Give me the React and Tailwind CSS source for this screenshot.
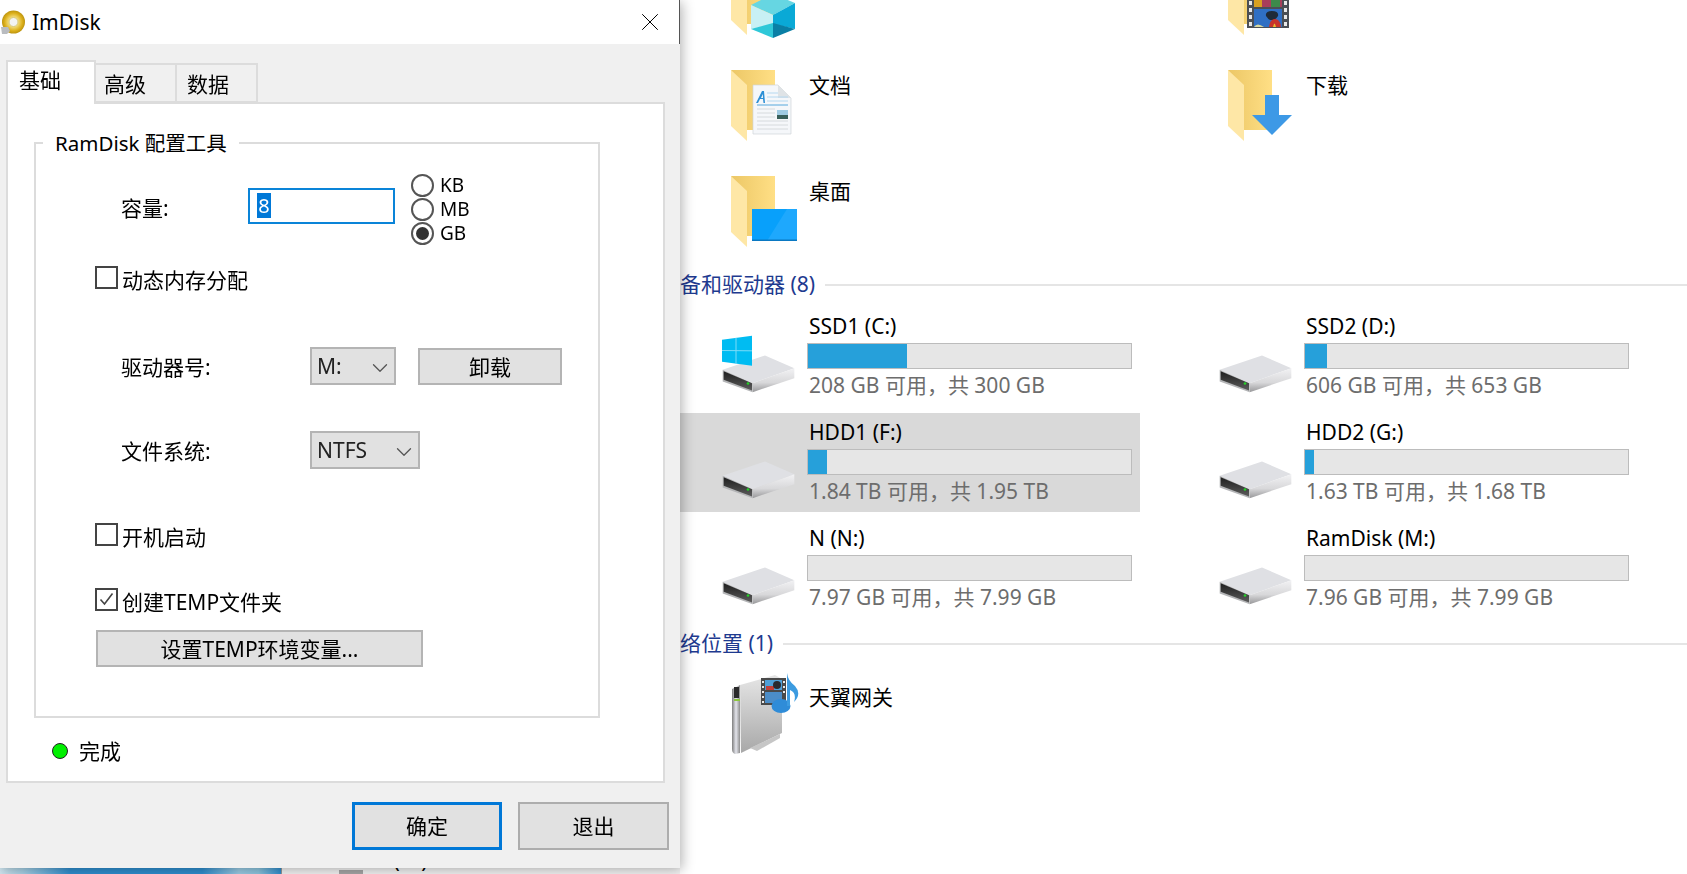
import React from "react";
import { ChevronDown, X } from "lucide-react";

const CJK = "font-['Noto_Sans','Noto_Sans_CJK_SC',sans-serif]";

const drives = [
  { name: "SSD1 (C:)", used: 99, info: "208 GB 可用，共 300 GB", windows: true },
  { name: "SSD2 (D:)", used: 22, info: "606 GB 可用，共 653 GB" },
  { name: "HDD1 (F:)", used: 19, info: "1.84 TB 可用，共 1.95 TB", selected: true },
  { name: "HDD2 (G:)", used: 9, info: "1.63 TB 可用，共 1.68 TB" },
  { name: "N (N:)", used: 0, info: "7.97 GB 可用，共 7.99 GB" },
  { name: "RamDisk (M:)", used: 0, info: "7.96 GB 可用，共 7.99 GB" },
];

function Folder({ children }) {
  return (
    <svg width="66" height="72" viewBox="0 0 66 72" className="shrink-0 overflow-visible">
      <defs>
        <linearGradient id="folderBack" x1="0" y1="0" x2="1" y2="0">
          <stop offset="0" stopColor="#ecc766" />
          <stop offset="1" stopColor="#ffdf85" />
        </linearGradient>
      </defs>
      <path d="M0 0H44V60H16Z" fill="url(#folderBack)" />
      <path d="M0 0L16 15V71L0 56Z" fill="#fee7a6" />
      {children}
    </svg>
  );
}

function DocOverlay() {
  return (
    <g>
      <path d="M22 15H47L60 28V64H22Z" fill="#f5f7fa" stroke="#d0d4d8" strokeWidth="0.7" />
      <path d="M47 15V28H60Z" fill="#dfe3e6" />
      <path d="M25 33L31 21H33L34 33H32.5L32 29H29L27 33ZM30 28H32L31.8 24Z" fill="#2d8fd5" />
      <path d="M36 23H47M36 27H57M36 31H57" stroke="#b5d8f0" strokeWidth="1" />
      <path d="M26 35H57" stroke="#56a8dc" strokeWidth="1" />
      <path d="M26 39H44M26 43H44M26 47H44M26 51H57M26 55H57M26 59H57" stroke="#d6dadd" strokeWidth="1" />
      <rect x="46" y="40" width="11" height="9" fill="#9fcbe3" />
      <rect x="46" y="45" width="11" height="4" fill="#385f5a" />
    </g>
  );
}

function ArrowOverlay() {
  return <path d="M37 25H51V45H64L44 65L24 45H37Z" fill="#3d99e6" />;
}

function DesktopOverlay() {
  return (
    <g>
      <rect x="21" y="33" width="45" height="32" fill="#08a0fb" />
      <path d="M36 65L56 33H66V65Z" fill="#1ea8fd" />
      <rect x="21" y="63.5" width="45" height="1.5" fill="#0a78c2" />
    </g>
  );
}

function CubeOverlay() {
  return (
    <g>
      <path d="M20 41L42 30L64 39L42 51Z" fill="#66d6e2" />
      <path d="M20 41L42 51V60L20 65Z" fill="#c8f0f4" />
      <path d="M42 51L64 39V65L42 60Z" fill="#0aa9d6" />
      <path d="M20 65L42 59V74Z" fill="#2fc8d8" />
      <path d="M42 59L64 65L42 74Z" fill="#0a7fa5" />
    </g>
  );
}

function FilmOverlay() {
  return (
    <g>
      <rect x="19" y="30" width="42" height="34" fill="#4b4f55" />
      <path d="M21 37H24V41H21ZM21 44H24V48H21ZM21 51H24V55H21ZM21 58H24V62H21ZM56 37H59V41H56ZM56 44H59V48H56ZM56 51H59V55H56ZM56 58H59V62H56Z" fill="#e8e8e8" />
      <rect x="26" y="36" width="28" height="7" fill="#a83e5a" />
      <rect x="26" y="45" width="28" height="18" fill="#2f6fc4" />
      <path d="M26 36H34V43H26Z" fill="#d8a020" />
      <path d="M43 36H52V43H43Z" fill="#3d8a4a" />
      <path d="M44 47Q37 47 38 52Q40 55 42 56H46Q49 54 50 52Q51 47 44 47Z" fill="#1f2a38" />
      <path d="M41 63Q42 55 47 55Q52 55 53 63Z" fill="#c8342c" />
      <path d="M45 63Q46.500 56 48 63Z" fill="#e8c030" />
      <path d="M26 63Q29 58 36 63Z" fill="#d8d8a0" />
    </g>
  );
}

function FolderItem({ label, children }) {
  return (
    <div className="flex h-[100px]">
      <div className="ml-[51px] w-[78px] shrink-0 pt-[6px]">
        <Folder>{children}</Folder>
      </div>
      <span className="mt-[7px] h-[28px] text-[21px] leading-[28px] text-black">{label}</span>
    </div>
  );
}

function DriveIcon({ windows }) {
  const id = windows ? "c" : "d";
  return (
    <svg width="80" height="62" viewBox="120 100 240 185" className="shrink-0">
      <defs>
        <linearGradient id={`side${id}`} x1="0" y1="0" x2="0" y2="1">
          <stop offset="0" stopColor="#f2f2f4" />
          <stop offset="0.6" stopColor="#d8d8da" />
          <stop offset="1" stopColor="#98989a" />
        </linearGradient>
        <linearGradient id={`panel${id}`} x1="0" y1="0" x2="0" y2="1">
          <stop offset="0" stopColor="#1e1e1e" />
          <stop offset="1" stopColor="#5c5c5c" />
        </linearGradient>
      </defs>
      <path d="M128 210L255 167L343 205L218 250Z" fill="#dfe0e4" />
      <path d="M218 250L343 205V235L218 277Z" fill={`url(#side${id})`} />
      <path d="M128 210L218 250V277L128 245Z" fill="#b4b5b7" />
      <path d="M131 214L216 250V272L131 240Z" fill={`url(#panel${id})`} />
      <circle cx="204" cy="251" r="4" fill="#25d028" />
      {windows && (
        <g>
          <path d="M126 120L216 108V198L126 186Z" fill="#00bcf2" />
          <path d="M168 114V192M126 152L216 153" stroke="#7cdcf8" strokeWidth="3" />
        </g>
      )}
    </svg>
  );
}

function Drive({ name, used, info, windows, selected }) {
  return (
    <div className={`flex h-[99px] ${selected ? "bg-[#d9d9d9]" : ""}`}>
      <div className="w-[127px] shrink-0 pl-[40px] pt-[26px]">
        <DriveIcon windows={windows} />
      </div>
      <div className="w-[325px] pt-[5px]">
        <div className="h-[28px] pl-[2px] text-[21px] leading-[28px] text-black">{name}</div>
        <div className="mt-[3px] h-[26px] border border-[#bcbcbc] bg-[#e6e6e6]">
          <div className="h-full bg-[#26a0da]" style={{ width: used }} />
        </div>
        <div className="mt-[2px] whitespace-nowrap pl-[2px] text-[21px] leading-[28px] text-[#6d6d6d]">{info}</div>
      </div>
    </div>
  );
}

function SectionHeader({ children }) {
  return (
    <div className="flex h-[28px] items-center overflow-hidden">
      <span className="whitespace-nowrap text-[21px] leading-[28px] text-[#1e3a8f]">{children}</span>
      <div className="ml-[10px] mt-[2px] h-[2px] flex-1 bg-[#e5e5e5]" />
    </div>
  );
}

function NasIcon() {
  return (
    <svg width="70" height="82" viewBox="0 0 70 82" className="shrink-0">
      <defs>
        <linearGradient id="nasBody" x1="0" y1="0" x2="0" y2="1">
          <stop offset="0" stopColor="#e6e6e6" />
          <stop offset="1" stopColor="#a8a8a8" />
        </linearGradient>
        <linearGradient id="nasFront" x1="0" y1="0" x2="1" y2="0">
          <stop offset="0" stopColor="#7e7e7e" />
          <stop offset="0.5" stopColor="#e4e5ec" />
          <stop offset="1" stopColor="#8d8d8d" />
        </linearGradient>
      </defs>
      <path d="M9 12L44 2L51 6V60L10 80Z" fill="url(#nasBody)" />
      <path d="M1 16L9 12V80L4 81Q1 80 1 76Z" fill="url(#nasFront)" />
      <rect x="3" y="14" width="5" height="11" fill="#2a2a2a" />
      <rect x="3" y="26" width="6" height="2" fill="#8dc63f" />
      <path d="M19 75L49 61V65L26 78Z" fill="#c6c6c6" />
      <rect x="30" y="5" width="25" height="27" fill="#4a4a4a" />
      <path d="M31 8H33V10H31ZM31 13H33V15H31ZM31 18H33V20H31ZM31 23H33V25H31ZM31 28H33V30H31ZM52 8H54V10H52ZM52 13H54V15H52ZM52 18H54V20H52Z" fill="#e8e8e8" />
      <rect x="34" y="7" width="17" height="10" fill="#4fa0d8" />
      <rect x="34" y="19" width="17" height="11" fill="#4b8dc8" />
      <path d="M35 17L35 13H43V17Z" fill="#c2403a" />
      <circle cx="46" cy="12" r="4" fill="#2a2a30" />
      <ellipse cx="50" cy="33" rx="9.500" ry="7" fill="#2f8cd8" />
      <path d="M56 0Q57 8 64 13Q71 21 63 29Q66 20 59 17V33H56Z" fill="#3c9be0" />
    </svg>
  );
}

function Explorer() {
  return (
    <div className="ml-[680px] flex h-[874px] flex-col overflow-hidden">
      <div className="mt-[-42px] grid grid-cols-[460px_460px] gap-x-[37px] gap-y-[6px]">
        <FolderItem label=""><CubeOverlay /></FolderItem>
        <FolderItem label=""><FilmOverlay /></FolderItem>
        <FolderItem label="文档"><DocOverlay /></FolderItem>
        <FolderItem label="下载"><ArrowOverlay /></FolderItem>
        <FolderItem label="桌面"><DesktopOverlay /></FolderItem>
      </div>
      <SectionHeader>备和驱动器 (8)</SectionHeader>
      <div className="mt-[9px] grid grid-cols-[460px_460px] gap-x-[37px] gap-y-[7px]">
        {drives.map((d) => (
          <Drive key={d.name} {...d} />
        ))}
      </div>
      <div className="mt-[11px]">
        <SectionHeader>络位置 (1)</SectionHeader>
      </div>
      <div className="ml-[51px] mt-[16px] flex">
        <div className="w-[78px]">
          <NasIcon />
        </div>
        <span className="mt-[10px] text-[21px] leading-[28px] text-black">天翼网关</span>
      </div>
    </div>
  );
}

function DiscIcon() {
  return (
    <svg width="26" height="25" viewBox="0 0 26 25">
      <defs>
        <radialGradient id="disc" cx="0.5" cy="0.5" r="0.55">
          <stop offset="0.3" stopColor="#f8e690" />
          <stop offset="0.7" stopColor="#dcb01c" />
          <stop offset="1" stopColor="#b08808" />
        </radialGradient>
      </defs>
      <circle cx="13.500" cy="12" r="11.500" fill="url(#disc)" />
      <circle cx="13.500" cy="12" r="4.500" fill="#f3f3f3" stroke="#d8c878" />
      <path d="M1 17H8L10 21L7 24H2Z" fill="#b9bcc0" />
    </svg>
  );
}

function Radio({ label, checked }) {
  return (
    <div className="flex h-[24px] items-center">
      <div className="flex h-[23px] w-[23px] items-center justify-center rounded-full border-2 border-[#555]">
        {checked && <div className="h-[13px] w-[13px] rounded-full bg-[#333]" />}
      </div>
      <span className="ml-[6px] text-[19px] leading-[24px]">{label}</span>
    </div>
  );
}

function CheckRow({ label, checked, className }) {
  return (
    <div className={`flex items-start ${className}`}>
      <div className="mt-[2px] flex h-[23px] w-[23px] shrink-0 items-center justify-center border-2 border-[#444]">
        {checked && (
          <svg width="17" height="17" viewBox="0 0 17 17" fill="none" stroke="#444" strokeWidth="1.600">
            <path d="M2.500 8.500L6.500 13L14.500 2.500" />
          </svg>
        )}
      </div>
      <span className="ml-[4px] mt-[2px] text-[21px] leading-[28px]">{label}</span>
    </div>
  );
}

function Combo({ value, className }) {
  return (
    <div className={`flex h-[38px] items-center justify-between border-2 border-[#b4b4b4] bg-[#e1e1e1] pl-[5px] pr-[1px] ${className}`}>
      <span className="text-[21px] leading-[28px] text-[#222]">{value}</span>
      <ChevronDown size={26} strokeWidth={1.2} className="mt-[3px] text-[#555]" />
    </div>
  );
}

function Btn({ children, className }) {
  return (
    <button className={`flex items-center justify-center bg-[#e1e1e1] text-[21px] leading-[28px] text-black ${className}`}>
      {children}
    </button>
  );
}

function Dialog() {
  return (
    <div className="absolute left-0 top-0 flex h-[868px] w-[680px] flex-col bg-[#f0f0f0] shadow-[2px_2px_12px_rgba(0,0,0,0.3)]">
      <div className="flex h-[44px] items-center justify-between border-r border-[#555] bg-white pr-[14px]">
        <div className="flex items-center">
          <DiscIcon />
          <span className="ml-[6px] text-[21px] leading-[28px] text-black">ImDisk</span>
        </div>
        <X size={30} strokeWidth={0.8} className="text-black" />
      </div>
      <div className="blur-[0.35px]">
        <div className="relative z-10 ml-[6px] mt-[16px] flex h-[44px] items-start">
          <div className="h-[44px] w-[90px] border-2 border-b-0 border-[#dcdcdc] bg-white pl-[11px] text-[21px] leading-[36px]">基础</div>
          <div className="mt-[3px] h-[40px] w-[81px] border-2 border-l-0 border-[#dcdcdc] pl-[8px] text-[21px] leading-[38px]">高级</div>
          <div className="mt-[3px] h-[40px] w-[81px] border-2 border-l-0 border-[#dcdcdc] pl-[10px] text-[21px] leading-[38px]">数据</div>
        </div>
        <div className="ml-[6px] mt-[-2px] flex h-[681px] w-[659px] flex-col border-2 border-[#dcdcdc] bg-white pl-[26px]">
          <div className="relative mt-[38px] h-[576px] w-[566px] border-2 border-[#dcdcdc] pl-[85px]">
            <span className="absolute left-[7px] top-[-15px] bg-white px-[12px] text-[20.5px] leading-[28px]">RamDisk 配置工具</span>
            <div className="flex pt-[29px]">
              <span className="mt-[21px] w-[127px] text-[21px] leading-[28px]">容量:</span>
              <div className="mt-[15px] h-[36px] w-[147px] border-2 border-[#0a84d8] pl-[7px] pt-[3px]">
                <span className="block h-[25px] w-[14px] bg-[#0078d7] text-center text-[20px] leading-[25px] text-white">8</span>
              </div>
              <div className="ml-[16px] flex flex-col">
                <Radio label="KB" />
                <Radio label="MB" />
                <Radio label="GB" checked />
              </div>
            </div>
            <CheckRow label="动态内存分配" className="ml-[-26px] mt-[19px]" />
            <div className="mt-[53px] flex items-center">
              <span className="w-[189px] pt-[2px] text-[21px] leading-[28px]">驱动器号:</span>
              <Combo value="M:" className="w-[86px]" />
              <Btn className="ml-[22px] mt-[1px] h-[37px] w-[144px] border-2 border-[#b4b4b4]">卸载</Btn>
            </div>
            <div className="mt-[46px] flex items-center">
              <span className="w-[189px] pt-[1px] text-[21px] leading-[28px]">文件系统:</span>
              <Combo value="NTFS" className="w-[110px]" />
            </div>
            <CheckRow label="开机启动" className="ml-[-26px] mt-[52px]" />
            <CheckRow label="创建TEMP文件夹" checked className="ml-[-26px] mt-[35px]" />
            <Btn className="ml-[-25px] mt-[14px] h-[37px] w-[327px] border-2 border-[#b4b4b4]">设置TEMP环境变量...</Btn>
          </div>
          <div className="mt-[19px] flex items-center pl-[18px]">
            <div className="h-[16px] w-[16px] rounded-full border border-[#222] bg-[#00f000]" />
            <span className="ml-[11px] text-[21px] leading-[28px]">完成</span>
          </div>
        </div>
        <div className="mt-[19px] flex justify-end gap-[16px] pr-[11px]">
          <Btn className="h-[48px] w-[150px] border-[3px] border-[#0078d7]">确定</Btn>
          <Btn className="h-[48px] w-[151px] border-2 border-[#adadad]">退出</Btn>
        </div>
      </div>
    </div>
  );
}

// strip of the window behind the dialog, only its last pixels show
function BehindStrip() {
  return (
    <div className="absolute bottom-0 left-0 flex h-[6px] w-[680px] overflow-hidden">
      <div className="w-[281px] bg-[linear-gradient(90deg,#cfe4ee_0%,#a9d3e8_8%,#2f8fd0_25%,#2f8fd0_72%,#9ccde6_85%,#8cc6e0_92%,#2f8fd0_100%)]" />
      <div className="flex flex-1 border-l border-[#999] bg-[#f5f5f5] pl-[57px]">
        <div className="mt-[2px] h-[4px] w-[24px] bg-[#a8a8a8]" />
        <span className="ml-[9px] mt-[-22px] text-[21px] leading-[28px] text-black">N (N:)</span>
      </div>
    </div>
  );
}

export default function App() {
  return (
    <div className={`relative h-[874px] w-[1687px] overflow-hidden bg-white ${CJK}`}>
      <Explorer />
      <BehindStrip />
      <Dialog />
    </div>
  );
}
